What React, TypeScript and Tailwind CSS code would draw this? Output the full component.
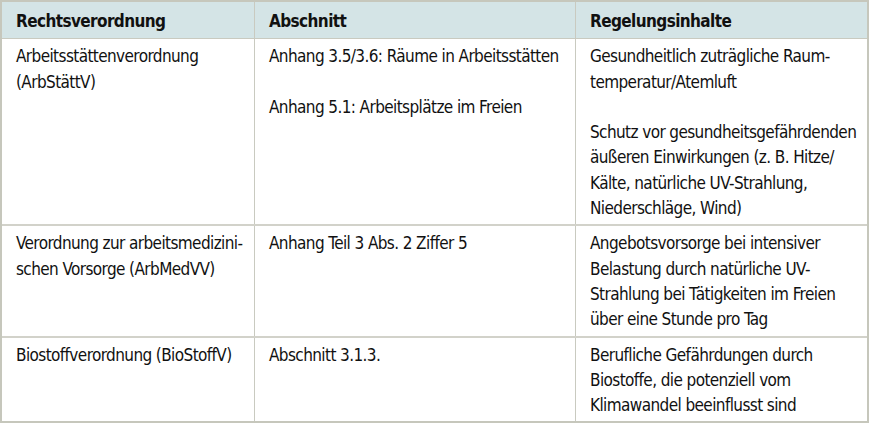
import React from "react";

const font = {
  fontFamily: '"Liberation Sans Narrow", "DejaVu Sans Condensed", "Liberation Sans", sans-serif',
};

function Cell({ children, last, header }: { children: React.ReactNode; last?: boolean; header?: boolean }) {
  return (
    <div
      className={
        (header
          ? "bg-[#d4e4e6] font-bold pt-[7px] pb-[4px] border-b border-[#c9cac0] "
          : "pt-[5px] pb-[3px] ") +
        (last ? "" : "border-r border-[#c9cac0] ") +
        "pl-[14px] pr-1 whitespace-nowrap"
      }
    >
      {children}
    </div>
  );
}

export default function App() {
  const rows: React.ReactNode[][] = [
    [
      <>Arbeitsstättenverordnung<br />(ArbStättV)</>,
      <>
        Anhang 3.5/3.6: Räume in Arbeitsstätten
        <br />
        <br />
        Anhang 5.1: Arbeitsplätze im Freien
      </>,
      <>
        Gesundheitlich zuträgliche Raum-
        <br />
        temperatur/Atemluft
        <br />
        <br />
        Schutz vor gesundheitsgefährdenden
        <br />
        äußeren Einwirkungen (z. B. Hitze/
        <br />
        Kälte, natürliche UV-Strahlung,
        <br />
        Niederschläge, Wind)
      </>,
    ],
    [
      <>Verordnung zur arbeitsmedizini-<br />schen Vorsorge (ArbMedVV)</>,
      <>Anhang Teil 3 Abs. 2 Ziffer 5</>,
      <>
        Angebotsvorsorge bei intensiver
        <br />
        Belastung durch natürliche UV-
        <br />
        Strahlung bei Tätigkeiten im Freien
        <br />
        über eine Stunde pro Tag
      </>,
    ],
    [
      <>Biostoffverordnung (BioStoffV)</>,
      <>Abschnitt 3.1.3.</>,
      <>
        Berufliche Gefährdungen durch
        <br />
        Biostoffe, die potenziell vom
        <br />
        Klimawandel beeinflusst sind
      </>,
    ],
  ];
  return (
    <div className="w-[872px] h-[435px] bg-white" style={font}>
      <div className="w-[869px] border-2 border-[#c6c7bc] text-[17px] tracking-[-0.6px] leading-[25.3px] text-[#111111]">
        <div className="grid grid-cols-[253px_321px_291px]">
          <Cell header>Rechtsverordnung</Cell>
          <Cell header>Abschnitt</Cell>
          <Cell header last>Regelungsinhalte</Cell>
        </div>
        {rows.map((r, i) => (
          <div
            key={i}
            className={"grid grid-cols-[253px_321px_291px] " + (i < rows.length - 1 ? "border-b-2 border-[#d2d2ca]" : "")}
          >
            <Cell>{r[0]}</Cell>
            <Cell>{r[1]}</Cell>
            <Cell last>{r[2]}</Cell>
          </div>
        ))}
      </div>
    </div>
  );
}
